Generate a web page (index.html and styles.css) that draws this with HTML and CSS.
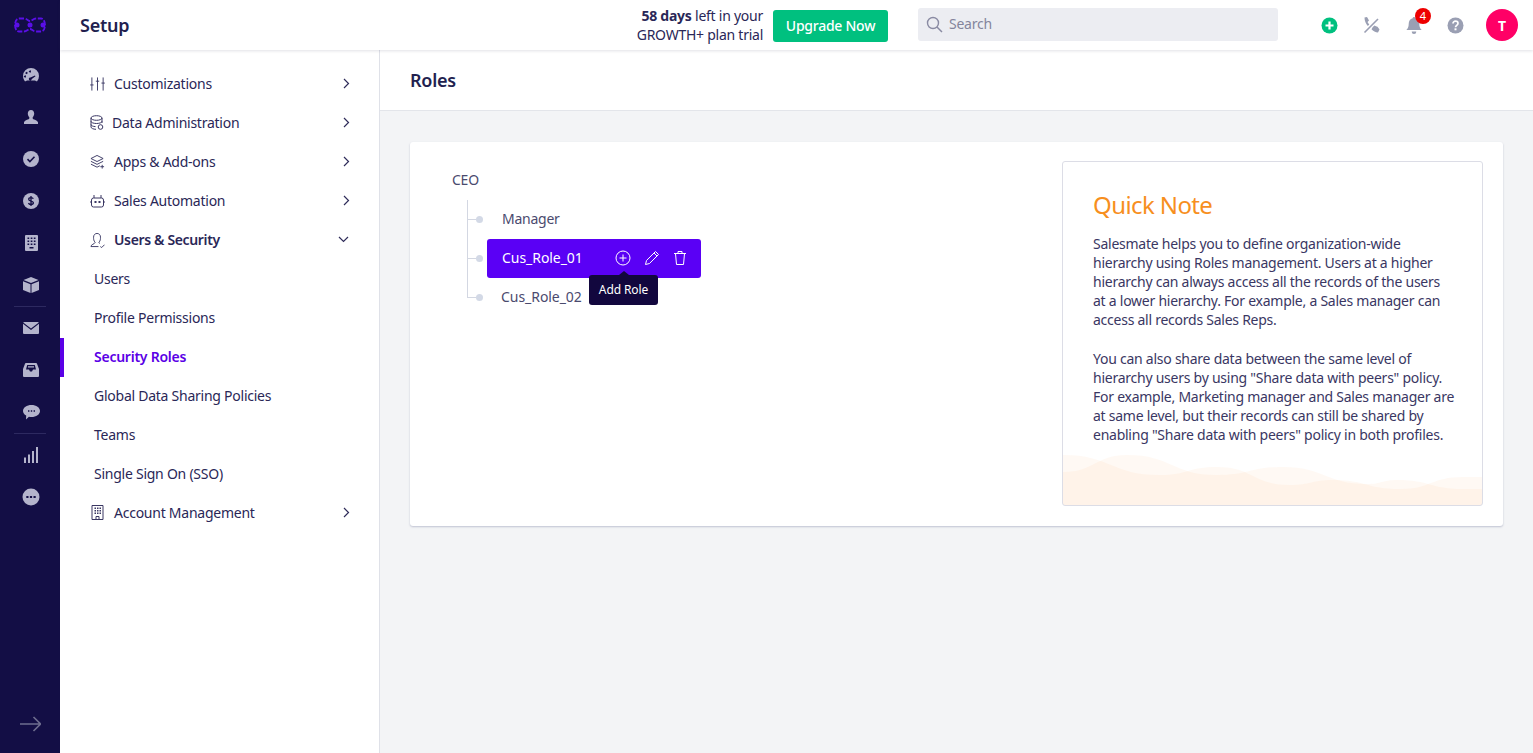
FILE: index.html
```html
<!DOCTYPE html>
<html lang="en">
<head>
<meta charset="utf-8">
<title>Roles - Setup</title>
<link rel="stylesheet" href="styles.css">
</head>
<body>
<div class="app">
  <aside class="rail">
    <div class="rail-logo">
      <svg width="32" height="16" viewBox="0 0 32 16"><g fill="none" stroke="#5a0fe8" stroke-width="1.800" stroke-dasharray="5 1.600"><path d="M5 1.500h5c3 0 4 2.500 6 2.500s3-2.500 6-2.500h5c2.500 0 4 3 4 6.500s-1.500 6.500-4 6.500h-5c-3 0-4-2.500-6-2.500s-3 2.500-6 2.500H5C2.500 14.500 1 11.500 1 8s1.500-6.500 4-6.500z"/></g><circle cx="3" cy="8" r="2.500" fill="#5a0fe8"/><circle cx="16" cy="8" r="2.500" fill="#5a0fe8"/><circle cx="29" cy="8" r="2.500" fill="#5a0fe8"/></svg>
    </div>
    <nav class="rail-group">
      <a class="rail-item"><svg width="16" height="14" viewBox="0 0 16 14"><path fill="#b4b4cc" fill-rule="evenodd" d="M8 0a8 8 0 0 0-8 8c0 2 .7 3.800 1.900 5.200.3.400 2.100-.7 2.100-.7h8s1.800 1.100 2.100.7A8 8 0 0 0 16 8a8 8 0 0 0-8-8zM3 8.500a1 1 0 1 1 0-.01zm1.500-3.500a1 1 0 1 1 0-.01zM8 3.500a1 1 0 1 1 0-.01zm4.500 4.800L8.800 11a1.500 1.500 0 1 1-1.300-1.600l4.400-1.900z"/></svg></a>
      <a class="rail-item"><svg width="14" height="14" viewBox="0 0 14 14"><path fill="#b4b4cc" d="M7 0c2 0 3.200 1.500 3.200 3.600 0 1.400-.6 2.800-1.500 3.600v1.300c0 1 4.300 1.300 5.300 3.700V14H0v-1.800c1-2.400 5.300-2.700 5.300-3.700V7.200C4.400 6.400 3.800 5 3.800 3.600 3.800 1.500 5 0 7 0z"/></svg></a>
      <a class="rail-item"><svg width="16" height="16" viewBox="0 0 16 16"><circle cx="8" cy="8" r="8" fill="#b4b4cc"/><path d="M4.500 8.200l2.400 2.300 4.600-4.800" fill="none" stroke="#130e45" stroke-width="1.600"/></svg></a>
      <a class="rail-item"><svg width="16" height="16" viewBox="0 0 16 16"><circle cx="8" cy="8" r="8" fill="#b4b4cc"/><path d="M10.300 5.800C10 4.900 9.100 4.600 8 4.600c-1.300 0-2.300.6-2.300 1.700 0 2.500 4.700 1 4.700 3.500 0 1.100-1 1.700-2.400 1.700-1.200 0-2.200-.5-2.500-1.500M8 3v10" fill="none" stroke="#130e45" stroke-width="1.300"/></svg></a>
      <a class="rail-item"><svg width="13" height="16" viewBox="0 0 13 16"><path fill="#b4b4cc" fill-rule="evenodd" d="M1 0h11a1 1 0 0 1 1 1v14a1 1 0 0 1-1 1H1a1 1 0 0 1-1-1V1a1 1 0 0 1 1-1zm1.500 2.500v1.600h1.700V2.500zm3.200 0v1.600h1.700V2.500zm3.100 0v1.600h1.700V2.500zm-6.300 3v1.600h1.700V5.500zm3.200 0v1.600h1.700V5.500zm3.100 0v1.600h1.700V5.500zm-6.300 3v1.600h1.700V8.500zm3.200 0v1.600h1.700V8.500zm3.100 0v1.600h1.700V8.500zM4.500 12v1.500h4V12z"/></svg></a>
      <a class="rail-item"><svg width="16" height="16" viewBox="0 0 16 16"><path fill="#b4b4cc" d="M8 0l7.500 3L8 6 .5 3zM0 4.200l7.500 3V16L0 13zM16 4.200V13l-7.500 3V7.200z"/></svg></a>
    </nav>
    <nav class="rail-group rail-divided">
      <a class="rail-item"><svg width="16" height="12" viewBox="0 0 16 12"><path fill="#b4b4cc" d="M1 0h14a1 1 0 0 1 .8.400L8 6.500.2.400A1 1 0 0 1 1 0zM0 1.800l8 6.200 8-6.200V11a1 1 0 0 1-1 1H1a1 1 0 0 1-1-1z"/></svg></a>
      <a class="rail-item"><svg width="16" height="14" viewBox="0 0 16 14"><path fill="#b4b4cc" fill-rule="evenodd" d="M3 0h10a1 1 0 0 1 1 .8L16 6v7a1 1 0 0 1-1 1H1a1 1 0 0 1-1-1V6L2 .8A1 1 0 0 1 3 0zm1.200 2L3 6.500h3l1 2h2l1-2h3L11.800 2zM5 3.300h6v1.200H5z"/></svg></a>
      <a class="rail-item"><svg width="17" height="15" viewBox="0 0 17 15"><path fill="#b4b4cc" fill-rule="evenodd" d="M8.500 0C13.200 0 17 2.600 17 6s-3.800 6-8.500 6c-.9 0-1.800-.1-2.600-.3L3 14.500l.2-3.900C1.200 9.500 0 7.900 0 6c0-3.400 3.800-6 8.500-6zM5 5.300v1.400h1.400V5.300zm2.800 0v1.400h1.400V5.300zm2.800 0v1.400H12V5.300z"/></svg></a>
    </nav>
    <nav class="rail-group rail-divided">
      <a class="rail-item"><svg width="14" height="16" viewBox="0 0 14 16"><path fill="#b4b4cc" d="M0 10.500h2V16H0zM4 7.500h2V16H4zM8 4h2v12H8zM12 0h2v16h-2z"/></svg></a>
      <a class="rail-item"><svg width="18" height="18" viewBox="0 0 18 18"><circle cx="9" cy="9" r="8.500" fill="#b4b4cc"/><path fill="#130e45" d="M4.300 7.900h2.200v2.200H4.300zM7.900 7.900h2.200v2.200H7.900zM11.500 7.900h2.200v2.200h-2.200z"/></svg></a>
    </nav>
    <a class="rail-expand"><svg width="21" height="16" viewBox="0 0 21 16"><path d="M0 8h20M13.500 1l7 7-7 7" fill="none" stroke="#6e6d8e" stroke-width="1.600"/></svg></a>
  </aside>

  <div class="body">
    <header class="topbar">
      <h1 class="topbar-title">Setup</h1>
      <div class="trial"><b>58 days</b> left in your<br>GROWTH+ plan trial</div>
      <a class="upgrade">Upgrade Now</a>
      <div class="search">
        <svg width="17" height="17" viewBox="0 0 17 17"><circle cx="7" cy="7" r="5.500" fill="none" stroke="#8a8ba3" stroke-width="1.400"/><path d="M11 11l5 5" stroke="#8a8ba3" stroke-width="1.500"/></svg>
        <span>Search</span>
      </div>
      <div class="top-icons">
        <a class="top-icon"><svg width="17" height="17" viewBox="0 0 17 17"><circle cx="8.500" cy="8.500" r="8" fill="#00c07f"/><path d="M8.500 4.500v8M4.500 8.500h8" stroke="#fff" stroke-width="2.200"/></svg></a>
        <a class="top-icon"><svg width="17" height="17" viewBox="0 0 17 17"><path fill="#9a9fb3" d="M1.500.5l2.500-.5 2 3.500-1.500 1.500c.5 1 1 1.800 1.800 2.500L4.800 9C3 7 1.500 4 1.500.5zM9.800 10l1.700-1.500c1 .6 1.800 1 3 1.300l2 2.700-1.500 3c-2.500 0-4.800-1.500-6.500-3.300z"/><path d="M1.500 15.500L15 2" stroke="#9a9fb3" stroke-width="1.600"/></svg></a>
        <a class="top-icon top-bell"><svg width="16" height="17" viewBox="0 0 16 17"><path fill="#9a9fb3" d="M8 0c.8 0 1.300.6 1.300 1.300C12 2 13.300 4 13.300 7c0 3 .9 4.600 2.400 6H.3c1.500-1.400 2.400-3 2.400-6 0-3 1.300-5 4-5.700C6.700.6 7.200 0 8 0zM5.800 14.500h4.400A2.200 2.200 0 0 1 8 17a2.200 2.200 0 0 1-2.200-2.500z"/></svg><span class="badge">4</span></a>
        <a class="top-icon"><svg width="17" height="17" viewBox="0 0 17 17"><circle cx="8.500" cy="8.500" r="8" fill="#9a9fb3"/><path d="M6 6.500c0-1.500 1.100-2.300 2.500-2.300S11 5 11 6.300c0 2-2.500 2-2.500 3.900" fill="none" stroke="#fff" stroke-width="1.700"/><path d="M7.500 11.300h2v2h-2z" fill="#fff"/></svg></a>
        <a class="avatar">T</a>
      </div>
    </header>

    <div class="content">
      <aside class="sidebar">
        <a class="side-row"><svg class="side-icon" width="15" height="16" viewBox="0 0 16 16"><path d="M2 1v14M8 1v14M14 1v14M.2 9h3.600M6.200 5h3.600M12.200 7h3.600" fill="none" stroke="#3a3763" stroke-width="1"/></svg><span class="side-label">Customizations</span><svg class="chev" width="7" height="11" viewBox="0 0 7 11"><path d="M1 1l4.500 4.500L1 10" fill="none" stroke="#2f2c5a" stroke-width="1.200"/></svg></a>
        <a class="side-row side-row-tight"><svg class="side-icon" width="15" height="16" viewBox="0 0 15 16"><g fill="none" stroke="#3a3763"><ellipse cx="6.500" cy="3" rx="5.500" ry="2.300"/><path d="M1 3v9c0 1.300 2.400 2.300 5 2.300M12 3v5M1 6.300c0 1.300 2.500 2.200 5.500 2.200S12 7.600 12 6.300M1 9.500c0 1.200 2 2 4.500 2.100"/><circle cx="10.500" cy="12" r="2.300"/></g></svg><span class="side-label">Data Administration</span><svg class="chev" width="7" height="11" viewBox="0 0 7 11"><path d="M1 1l4.500 4.500L1 10" fill="none" stroke="#2f2c5a" stroke-width="1.200"/></svg></a>
        <a class="side-row"><svg class="side-icon" width="15" height="16" viewBox="0 0 16 16"><g fill="none" stroke="#3a3763"><path d="M7.500 1L14 4.300 7.500 7.500 1 4.300zM1 7.300l6.500 3.200 6.500-3.200M1 10.300l6.500 3.200 3-1.500M13 11v4M11 13h4"/></g></svg><span class="side-label">Apps &amp; Add-ons</span><svg class="chev" width="7" height="11" viewBox="0 0 7 11"><path d="M1 1l4.500 4.500L1 10" fill="none" stroke="#2f2c5a" stroke-width="1.200"/></svg></a>
        <a class="side-row"><svg class="side-icon" width="15" height="14" viewBox="0 0 15 14"><g fill="none" stroke="#3a3763"><rect x="1.500" y="4" width="12" height="9" rx="2"/><path d="M4 1v3M11 1v3M0 8h1.500M13.500 8H15"/></g><path fill="#3a3763" d="M4.500 7h2v2h-2zM8.500 7h2v2h-2z"/></svg><span class="side-label">Sales Automation</span><svg class="chev" width="7" height="11" viewBox="0 0 7 11"><path d="M1 1l4.500 4.500L1 10" fill="none" stroke="#2f2c5a" stroke-width="1.200"/></svg></a>
        <a class="side-row side-open"><svg class="side-icon" width="15" height="16" viewBox="0 0 16 16"><path d="M1 15c0-2.500 4-2.500 4.500-4.500C3.800 9 3.800 6.500 3.800 5 3.800 2.500 5.500 1 7.500 1s3.700 1.500 3.700 4c0 1.500 0 4-1.700 5.500.1.500.4 1 1 1.400M1 15h8M11 15l1.500 1 3-3" fill="none" stroke="#3a3763"/></svg><span class="side-label">Users &amp; Security</span><svg class="chev-down" width="11" height="7" viewBox="0 0 11 7"><path d="M1 1l4.500 4.500L10 1" fill="none" stroke="#2f2c5a" stroke-width="1.200"/></svg></a>
        <a class="side-sub">Users</a>
        <a class="side-sub">Profile Permissions</a>
        <a class="side-sub side-active">Security Roles</a>
        <a class="side-sub">Global Data Sharing Policies</a>
        <a class="side-sub">Teams</a>
        <a class="side-sub">Single Sign On (SSO)</a>
        <a class="side-row"><svg class="side-icon" width="15" height="15" viewBox="-1 0 15 15"><path d="M1 .5h11v14H1zM5 14.500v-3h3v3" fill="none" stroke="#3a3763"/><path fill="#3a3763" d="M3.500 2.500h1.500V4H3.500zM6 2.500h1.500V4H6zM8.500 2.500H10V4H8.500zM3.500 5h1.500v1.500H3.500zM6 5h1.500v1.500H6zM8.500 5H10v1.500H8.500zM3.500 7.500h1.500V9H3.500zM6 7.500h1.500V9H6zM8.500 7.500H10V9H8.500z"/></svg><span class="side-label">Account Management</span><svg class="chev" width="7" height="11" viewBox="0 0 7 11"><path d="M1 1l4.500 4.500L1 10" fill="none" stroke="#2f2c5a" stroke-width="1.200"/></svg></a>
      </aside>

      <main class="main">
        <div class="page-head"><h2 class="page-title">Roles</h2></div>
        <div class="page-body">
          <section class="card">
            <div class="tree">
              <div class="tree-root">CEO</div>
              <ul class="tree-list">
                <li class="tree-node"><span class="tree-name">Manager</span></li>
                <li class="tree-node tree-selected">
                  <div class="role-pill">
                    <span class="pill-name">Cus_Role_01</span>
                    <svg class="pill-icon" width="16" height="16" viewBox="0 0 16 16"><circle cx="8" cy="8" r="7" fill="none" stroke="#fff"/><path d="M8 4.500v7M4.500 8h7" stroke="#fff"/></svg>
                    <svg class="pill-icon" width="16" height="16" viewBox="0 0 16 16"><path d="M1.500 14.500l1-4L11.500 1.500l3 3-9 9zM10 3l3 3" fill="none" stroke="#fff"/></svg>
                    <svg class="pill-icon" width="14" height="16" viewBox="0 0 14 16"><path d="M1 3.500h12M5 3.500V1.500h4v2M2.500 3.500l1 11h7l1-11" fill="none" stroke="#fff"/></svg>
                    <div class="tooltip">Add Role</div>
                  </div>
                </li>
                <li class="tree-node tree-last"><span class="tree-name">Cus_Role_02</span></li>
              </ul>
            </div>
            <aside class="note">
              <h3 class="note-title">Quick Note</h3>
              <p class="note-text">Salesmate helps you to define organization-wide<br>hierarchy using Roles management. Users at a higher<br>hierarchy can always access all the records of the users<br>at a lower hierarchy. For example, a Sales manager can<br>access all records Sales Reps.</p>
              <p class="note-text">You can also share data between the same level of<br>hierarchy users by using "Share data with peers" policy.<br>For example, Marketing manager and Sales manager are<br>at same level, but their records can still be shared by<br>enabling "Share data with peers" policy in both profiles.</p>
              <svg class="note-waves" width="419" height="52" viewBox="0 0 419 52"><path class="wave" d="M0 2C48 2 48 22 97 22C125 22 125 14 154 14C190 14 190 32 227 32C248 32 248 27 270 27C303 27 303 36 337 36C368 36 368 24 400 24L419 24V52H0z"/><path class="wave" d="M0 19C32 19 32 2 64 2C109 2 109 22 154 22C187 22 187 14 220 14C262 14 262 31 304 31C319 31 319 27 334 27C367 27 367 36 400 36L419 36V52H0z"/></svg>
            </aside>
          </section>
        </div>
      </main>
    </div>
  </div>
</div>
</body>
</html>
```
FILE: styles.css
```css
* { box-sizing: border-box; }
html, body { margin: 0; height: 100%; overflow: hidden; }
body {
  font-family: "Noto Sans", "Open Sans", sans-serif;
  font-size: 14px;
  color: #2a2757;
  background: #f3f4f6;
  letter-spacing: -0.25px;
}
a { color: inherit; text-decoration: none; }
h1, h2, h3, p, ul { margin: 0; padding: 0; }
ul { list-style: none; }

.app { display: flex; height: 753px; }

/* icon rail */
.rail {
  width: 60px;
  flex: none;
  background: #130e45;
  display: flex;
  flex-direction: column;
  align-items: center;
}
.rail-logo { height: 50px; display: flex; align-items: center; justify-content: center; }
.rail-group { width: 32px; padding: 4px 0 0; display: flex; flex-direction: column; }
.rail-divided { border-top: 1px solid #2d2960; padding-top: 0; }
.rail-item { height: 42px; padding-left: 2px; display: flex; align-items: center; justify-content: center; }
.rail-expand { margin-top: auto; height: 58px; display: flex; align-items: center; justify-content: center; }

/* top bar */
.body { flex: 1; min-width: 0; display: flex; flex-direction: column; }
.topbar {
  height: 50px;
  flex: none;
  background: #fff;
  display: flex;
  align-items: center;
  padding-left: 20px;
  box-shadow: 0 1px 3px rgba(40, 40, 80, .14);
  position: relative;
  z-index: 2;
}
.topbar-title { font-size: 18px; font-weight: 600; color: #221f4f; flex: 1; line-height: 1; }
.trial { text-align: right; line-height: 19px; color: #2a2757; margin-right: 10px; }
.trial b { font-weight: 700; }
.upgrade {
  width: 115px;
  height: 32px;
  margin-top: 2px;
  padding-bottom: 2px;
  background: #00c07f;
  border-radius: 3px;
  color: #fff;
  font-weight: 500;
  display: flex;
  align-items: center;
  justify-content: center;
  margin-right: 30px;
}
.search {
  width: 360px;
  height: 33px;
  background: #ecedf2;
  border-radius: 3px;
  display: flex;
  align-items: center;
  gap: 6px;
  padding-left: 8px;
  color: #84859c;
  margin-top: -1px;
}
.search span { margin-top: -2px; }
.top-icons { display: flex; align-items: center; margin-left: 43px; margin-right: 15px; }
.top-icon { width: 17px; height: 17px; display: flex; align-items: center; justify-content: center; margin-right: 25px; position: relative; }
.top-icon:nth-child(4) { margin-right: 22px; }
.badge {
  position: absolute;
  top: -9px;
  left: 10px;
  width: 16px;
  height: 16px;
  border-radius: 50%;
  background: #ee0000;
  color: #fff;
  font-size: 11px;
  letter-spacing: 0;
  display: flex;
  align-items: center;
  justify-content: center;
}
.avatar {
  width: 32px;
  height: 32px;
  border-radius: 50%;
  background: #ff0066;
  color: #fff;
  font-weight: 700;
  display: flex;
  align-items: center;
  justify-content: center;
}

/* sidebar */
.content { flex: 1; display: flex; min-height: 0; }
.sidebar {
  width: 320px;
  flex: none;
  background: #fff;
  border-right: 1px solid #dfe1e8;
  padding-top: 15px;
  display: flex;
  flex-direction: column;
}
.side-row { height: 39px; display: flex; align-items: center; padding: 0 29px 2px 30px; }
.side-row-tight .side-label { margin-left: 7px; }
.side-icon { flex: none; }
.side-label { flex: 1; margin-left: 9px; }
.chev { flex: none; }
.chev-down { flex: none; margin-right: 1px; }
.side-open .side-label { font-weight: 600; letter-spacing: -0.35px; }
.side-sub { height: 39px; display: flex; align-items: center; padding: 0 0 2px 34px; }
.side-active { color: #5a00e6; font-weight: 600; box-shadow: inset 4px 0 0 #5a00e6; }

/* main */
.main { flex: 1; min-width: 0; display: flex; flex-direction: column; }
.page-head { height: 61px; background: #fff; border-bottom: 1px solid #e3e5ea; display: flex; align-items: center; padding: 0 0 1px 30px; }
.page-title { font-size: 18px; font-weight: 600; color: #221f4f; }
.page-body { padding: 31px 30px; }
.card {
  height: 384px;
  background: #fff;
  border-radius: 3px;
  box-shadow: 0 1px 2px rgba(60, 70, 120, .28);
  display: flex;
  padding: 19px 20px 20px 42px;
}

/* tree */
.tree { flex: 1; color: #4a4a6e; }
.tree-root { height: 39px; display: flex; align-items: center; padding-bottom: 2px; }
.tree-list { margin-left: 15px; }
.tree-node { height: 39px; display: flex; align-items: center; position: relative; padding-left: 35px; }
.tree-node::before { content: ""; position: absolute; left: 0; top: 0; bottom: 0; width: 1px; background: #d3d7e2; }
.tree-last::before { bottom: 19px; }
.tree-node::after { content: ""; position: absolute; left: 0; top: 19px; width: 9px; height: 1px; background: #d3d7e2; }
.tree-name { margin-top: -2px; }
.tree-name::before { content: ""; position: absolute; left: 9px; top: 16px; width: 7px; height: 7px; border-radius: 50%; background: #d3d9e6; }
.tree-last { padding-left: 34px; }
.tree-selected { padding-left: 20px; }
.tree-selected .role-pill::before { content: ""; position: absolute; left: -11px; top: 16px; width: 7px; height: 7px; border-radius: 50%; background: #d3d9e6; }
.role-pill {
  width: 214px;
  height: 39px;
  background: #5a00f5;
  border-radius: 3px;
  color: #fff;
  display: flex;
  align-items: center;
  padding-left: 15px;
  position: relative;
}
.pill-name { width: 113px; margin-top: -2px; letter-spacing: -0.05px; }
.tree-last .tree-name { letter-spacing: -0.05px; }
.pill-icon { margin: -2px 13px 0 0; flex: none; }
.tooltip {
  position: absolute;
  left: 102px;
  top: 36px;
  width: 69px;
  height: 30px;
  padding-bottom: 2px;
  background: #12073e;
  border-radius: 3px;
  font-size: 12px;
  letter-spacing: -0.1px;
  display: flex;
  align-items: center;
  justify-content: center;
  z-index: 3;
}
.tooltip::before {
  content: "";
  position: absolute;
  left: 30px;
  top: -4px;
  border-left: 5px solid transparent;
  border-right: 5px solid transparent;
  border-bottom: 4px solid #12073e;
}

/* quick note */
.note {
  width: 421px;
  height: 345px;
  flex: none;
  border: 1px solid #dcdde6;
  border-radius: 3px;
  padding: 26px 30px 0;
  position: relative;
  overflow: hidden;
}
.note-title { font-size: 24px; font-weight: 400; color: #f78f1e; line-height: 34px; margin-bottom: 12px; letter-spacing: -0.6px; }
.note-text { line-height: 19px; color: #3a3763; margin-bottom: 20px; position: relative; z-index: 1; white-space: nowrap; }
.note-waves { position: absolute; left: 0; bottom: 0; display: block; }
.wave { fill: #fb9a4a; opacity: .06; }
```
